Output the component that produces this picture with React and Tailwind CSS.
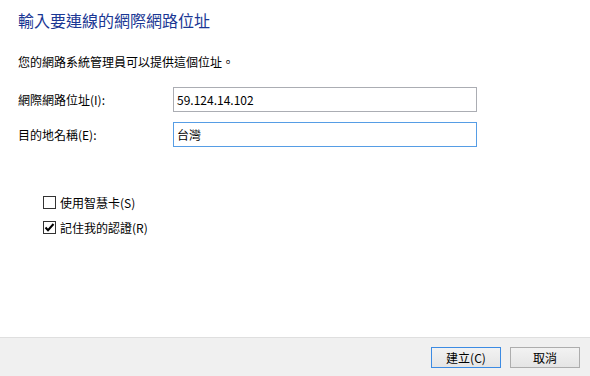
import React, { useState } from 'react';

const FONT = { fontFamily: '"Noto Sans CJK TC", "Noto Sans", sans-serif' };

const CheckBox = ({ checked, label, onToggle }) => (
  <label className="flex items-center gap-[4px] h-[25px] cursor-default" onClick={onToggle}>
    <span className="w-[13px] h-[13px] border border-[#333333] bg-white flex items-center justify-center">
      {checked && (
        <svg width="11" height="11" viewBox="0 0 11 11">
          <path d="M1.5 5.5 L4 8.2 L9.5 2" stroke="#000" strokeWidth="2" fill="none" />
        </svg>
      )}
    </span>
    <span className="text-[12px] text-black">{label}</span>
  </label>
);

const Field = ({ label, value, focused }) => (
  <div className="flex items-center h-[25px]">
    <span className="w-[155px] text-[12px] text-black">{label}</span>
    <div
      className={`w-[304px] h-[25px] border bg-white flex items-center px-[3px] text-[12px] text-black ${
        focused ? 'border-[#569de5]' : 'border-[#abadb3]'
      }`}
    >
      {value}
    </div>
  </div>
);

export default function App() {
  const [smartCard, setSmartCard] = useState(false);
  const [remember, setRemember] = useState(true);

  return (
    <div className="w-[590px] h-[376px] flex flex-col bg-white" style={FONT}>
      <div className="flex-1 pl-[18px]">
        <h1 className="text-[16px] leading-[22px] text-[#1a3794] pt-[9px]">輸入要連線的網際網路位址</h1>
        <p className="text-[12px] leading-[16px] text-black mt-[23px]">您的網路系統管理員可以提供這個位址。</p>

        <div className="flex flex-col gap-[10px] mt-[17px]">
          <Field label="網際網路位址(I):" value="59.124.14.102" />
          <Field label="目的地名稱(E):" value="台灣" focused />
        </div>

        <div className="flex flex-col mt-[43px] pl-[25px]">
          <CheckBox checked={smartCard} label="使用智慧卡(S)" onToggle={() => setSmartCard(!smartCard)} />
          <CheckBox checked={remember} label="記住我的認證(R)" onToggle={() => setRemember(!remember)} />
        </div>
      </div>

      <div className="h-[39px] border-t border-[#dfdfdf] bg-[#f0f0f0] flex justify-end items-start pt-[9px] pr-[10px] gap-[9px]">
        <button className="w-[70px] h-[21px] border border-[#3c8be3] bg-gradient-to-b from-[#f2f2f2] to-[#e5e5e5] text-[12px] text-black leading-none">
          建立(C)
        </button>
        <button className="w-[70px] h-[21px] border border-[#adadad] bg-gradient-to-b from-[#f2f2f2] to-[#e5e5e5] text-[12px] text-black leading-none">
          取消
        </button>
      </div>
    </div>
  );
}
